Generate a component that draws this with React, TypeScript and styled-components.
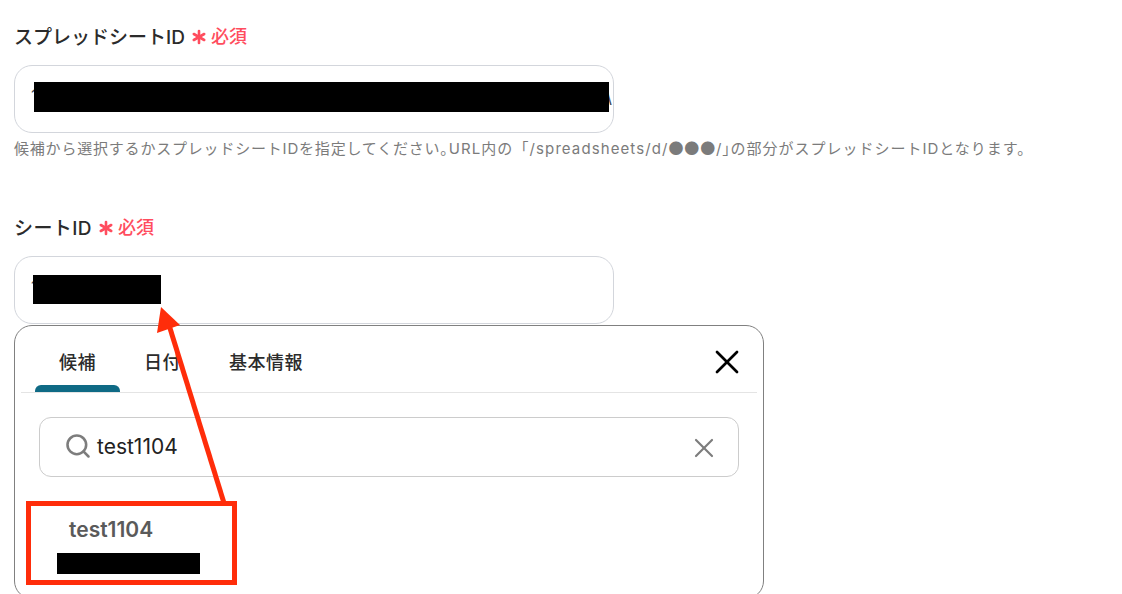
import React from 'react'
import styled, { createGlobalStyle } from 'styled-components'
import { Asterisk, Search, X } from 'lucide-react'

const GlobalStyle = createGlobalStyle`
  html, body {
    margin: 0;
    background: #fff;
    overflow: hidden;
  }
  body {
    font-family: Inter, "Noto Sans CJK JP", "Noto Sans", sans-serif;
  }
`

const Page = styled.div`
  position: relative;
  width: 1122px;
  height: 594px;
  padding: 21px 0 0 14px;
  box-sizing: border-box;
  overflow: hidden;
`

const Field = styled.section<{ $gap?: number }>`
  margin-bottom: ${props => props.$gap || 0}px;
`

const LabelRow = styled.div`
  display: flex;
  align-items: center;
  height: 28px;
  margin-bottom: 16px;
`

const Label = styled.label<{ $spacing?: number }>`
  font-size: 19px;
  font-weight: 500;
  letter-spacing: ${props => props.$spacing || 0}px;
  color: #2b2b2b;
`

const RequiredMark = styled(Asterisk)`
  flex: none;
  margin-left: 2px;
  margin-top: 3px;
  color: #ff4d5e;
`

const Required = styled.span`
  font-size: 18px;
  font-weight: 500;
  color: #ff4d5e;
`

const InputBox = styled.div`
  position: relative;
  box-sizing: border-box;
  width: 600px;
  height: 68px;
  border: 1px solid #d3d6dc;
  border-radius: 18px;
  background: #fff;
  overflow: hidden;
`

const InputValue = styled.div`
  display: flex;
  justify-content: space-between;
  padding: 16px 1px 0 16px;
  font-size: 18px;
  line-height: 30px;
  white-space: nowrap;
  color: #444a55;
`

const Redaction = styled.div<{ $left: number; $top: number; $width: number; $height: number }>`
  position: absolute;
  left: ${props => props.$left}px;
  top: ${props => props.$top}px;
  width: ${props => props.$width}px;
  height: ${props => props.$height}px;
  background: #000;
`

const Help = styled.p`
  margin: 5px 0 0;
  font-size: 15px;
  line-height: 20px;
  letter-spacing: 0.8px;
  white-space: nowrap;
  color: #7b7b7b;
`

const Punct = styled.span`
  font-feature-settings: "halt";
`

const Dots = styled.span`
  font-family: "Noto Sans CJK JP", sans-serif;
`

const HelpRun = styled.span<{ $spacing: number }>`
  letter-spacing: ${props => props.$spacing}px;
`

const Panel = styled.div`
  position: relative;
  box-sizing: border-box;
  width: 750px;
  height: 274px;
  margin-top: 1px;
  padding: 0 6px;
  border: 1px solid #808080;
  border-radius: 18px;
  background: #fff;
`

const TabBar = styled.div`
  display: flex;
  align-items: stretch;
  height: 66px;
  border-bottom: 1px solid #e4e4e4;
`

const Tab = styled.div<{ $active?: boolean }>`
  position: relative;
  display: flex;
  align-items: center;
  box-sizing: border-box;
  margin-left: ${props => (props.$active ? 14 : 0)}px;
  padding: 4px 24px 0;
  font-size: 18px;
  font-weight: 500;
  letter-spacing: 0.5px;
  color: #2b2b2b;

  ${props => props.$active && `
    &::after {
      content: '';
      position: absolute;
      left: 0;
      right: 0;
      bottom: 0;
      height: 7px;
      border-radius: 6px 6px 0 0;
      background: #0f6a85;
    }
  `}
`

const CloseButton = styled.button`
  display: flex;
  margin-left: auto;
  align-self: center;
  margin-top: 6px;
  margin-right: 10px;
  padding: 0;
  border: 0;
  background: none;
  color: #000;
`

const SearchBox = styled.div`
  display: flex;
  align-items: center;
  box-sizing: border-box;
  height: 60px;
  margin: 24px 18px 0;
  padding: 0 24px;
  border: 1px solid #cccccc;
  border-radius: 12px;
`

const SearchIcon = styled(Search)`
  flex: none;
  margin-top: -2px;
  color: #7d7d7d;
`

const SearchText = styled.span`
  margin-left: 5px;
  margin-top: -2px;
  font-size: 21px;
  color: #222;
`

const ClearIcon = styled(X)`
  flex: none;
  margin-left: auto;
  margin-right: -6px;
  margin-top: 2px;
  color: #7d7d7d;
`

const Option = styled.div`
  position: relative;
  padding: 38px 0 0 48px;
`

const OptionTitle = styled.div`
  font-size: 21px;
  line-height: 30px;
  font-weight: 600;
  color: #5a5a5a;
`

const Highlight = styled.div`
  position: absolute;
  left: 26px;
  top: 501px;
  box-sizing: border-box;
  width: 211px;
  height: 84px;
  border: 5px solid #ff2d0a;
`

const Arrow = styled.svg`
  position: absolute;
  left: 0;
  top: 0;
  pointer-events: none;
`

const App: React.FC = () => {
  return (
    <Page>
      <GlobalStyle />
      <Field $gap={53}>
        <LabelRow>
          <Label>スプレッドシートID</Label>
          <RequiredMark size={24} strokeWidth={2.6} />
          <Required>必須</Required>
        </LabelRow>
        <InputBox>
          <InputValue><span>1</span><span>\</span></InputValue>
          <Redaction $left={19} $top={16} $width={575} $height={30} />
        </InputBox>
        <Help>
          候補から選択するかスプレッドシートIDを指定してください<Punct>。</Punct>
          <HelpRun $spacing={1.1}>URL内の「/spreadsheets/d/</HelpRun>
          <Dots>●●●</Dots>/<Punct>」</Punct>
          <HelpRun $spacing={1}>の部分がスプレッドシートIDとなります。</HelpRun>
        </Help>
      </Field>
      <Field>
        <LabelRow>
          <Label $spacing={0.4}>シートID</Label>
          <RequiredMark size={24} strokeWidth={2.6} />
          <Required>必須</Required>
        </LabelRow>
        <InputBox>
          <InputValue><span>1</span></InputValue>
          <Redaction $left={18} $top={18} $width={128} $height={29} />
        </InputBox>
        <Panel>
          <TabBar>
            <Tab $active>候補</Tab>
            <Tab>日付</Tab>
            <Tab>基本情報</Tab>
            <CloseButton><X size={40} strokeWidth={1.6} /></CloseButton>
          </TabBar>
          <SearchBox>
            <SearchIcon size={28} strokeWidth={2.2} />
            <SearchText>test1104</SearchText>
            <ClearIcon size={32} strokeWidth={1.6} />
          </SearchBox>
          <Option>
            <OptionTitle>test1104</OptionTitle>
            <Redaction $left={36} $top={76} $width={143} $height={21} />
          </Option>
        </Panel>
      </Field>
      <Highlight />
      <Arrow width="1122" height="594" viewBox="0 0 1122 594">
        <line x1="224" y1="503" x2="169" y2="325" stroke="#ff2d0a" strokeWidth="5" />
        <polygon points="161,307 180,325 157,333" fill="#ff2d0a" />
      </Arrow>
    </Page>
  )
}

export default App
